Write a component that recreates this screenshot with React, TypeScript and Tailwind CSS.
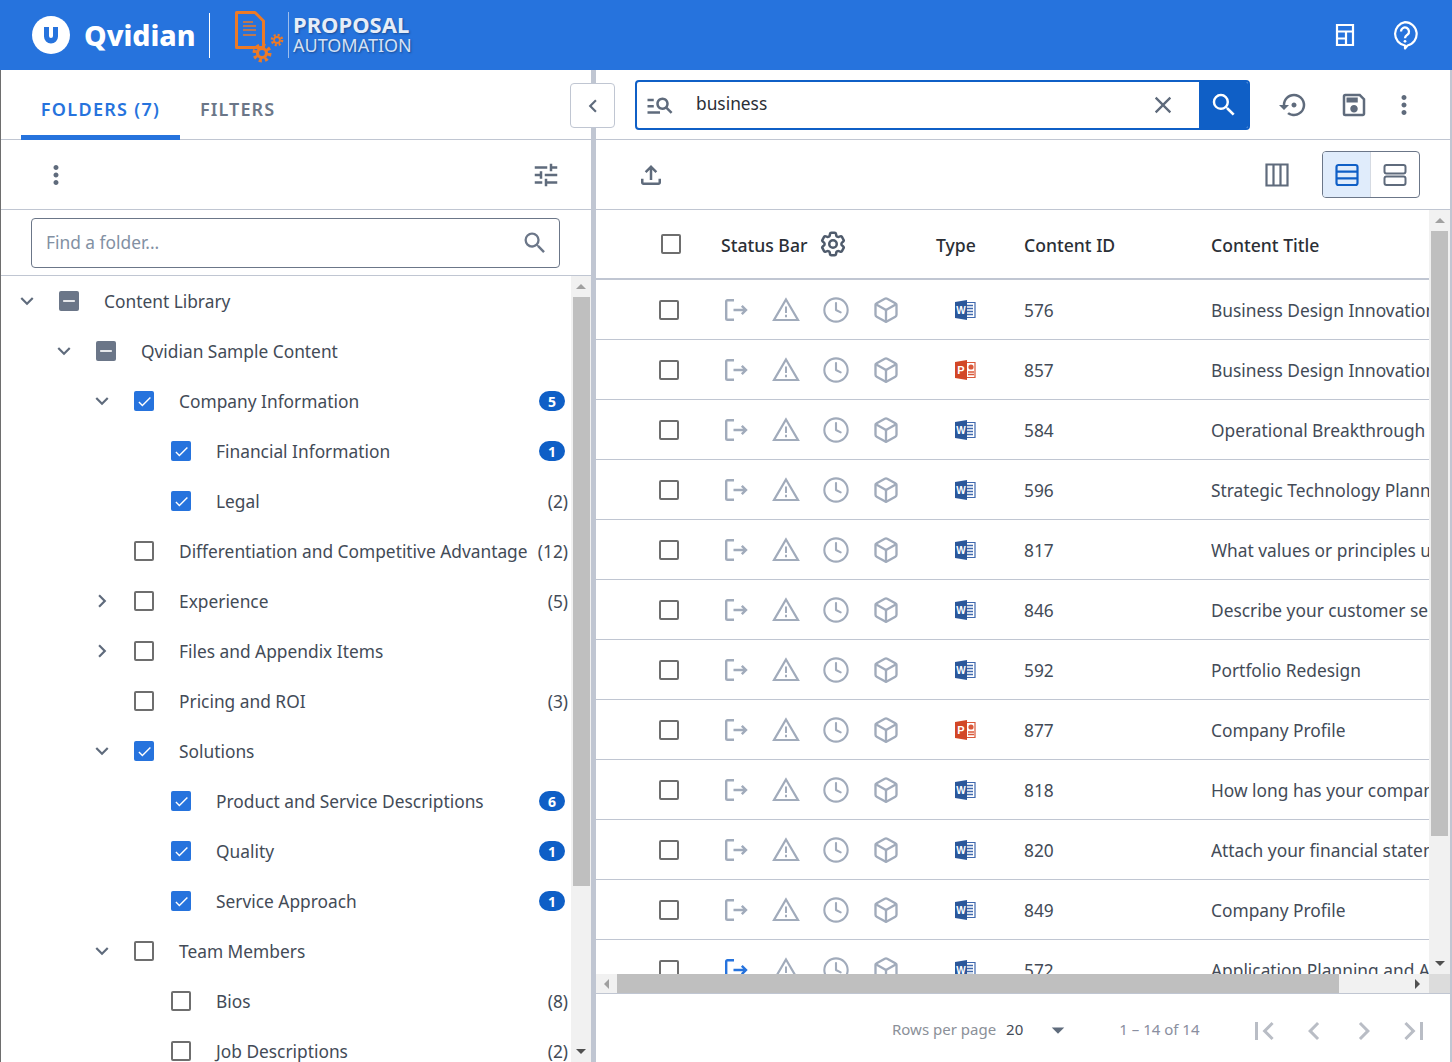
import { ReactNode } from 'react';
import {
  MdManageSearch,
  MdClose,
  MdSearch,
  MdSettingsBackupRestore,
  MdOutlineSave,
  MdMoreVert,
  MdOutlineFileUpload,
  MdTune,
  MdKeyboardArrowDown,
  MdKeyboardArrowRight,
  MdKeyboardArrowLeft,
  MdArrowDropDown,
  MdFirstPage,
  MdLastPage,
  MdCheck,
  MdRemove,
} from 'react-icons/md';
import { HiOutlineCog6Tooth } from 'react-icons/hi2';
import { Clock, Box } from 'lucide-react';

type TreeRow = {
  label: string;
  level: 0 | 1 | 2 | 3;
  chevron?: 'down' | 'right';
  state: 'none' | 'checked' | 'partial';
  badge?: number;
  count?: number;
};

const treeRows: TreeRow[] = [
  { label: 'Content Library', level: 0, chevron: 'down', state: 'partial' },
  { label: 'Qvidian Sample Content', level: 1, chevron: 'down', state: 'partial' },
  { label: 'Company Information', level: 2, chevron: 'down', state: 'checked', badge: 5 },
  { label: 'Financial Information', level: 3, state: 'checked', badge: 1 },
  { label: 'Legal', level: 3, state: 'checked', count: 2 },
  { label: 'Differentiation and Competitive Advantage', level: 2, state: 'none', count: 12 },
  { label: 'Experience', level: 2, chevron: 'right', state: 'none', count: 5 },
  { label: 'Files and Appendix Items', level: 2, chevron: 'right', state: 'none' },
  { label: 'Pricing and ROI', level: 2, state: 'none', count: 3 },
  { label: 'Solutions', level: 2, chevron: 'down', state: 'checked' },
  { label: 'Product and Service Descriptions', level: 3, state: 'checked', badge: 6 },
  { label: 'Quality', level: 3, state: 'checked', badge: 1 },
  { label: 'Service Approach', level: 3, state: 'checked', badge: 1 },
  { label: 'Team Members', level: 2, chevron: 'down', state: 'none' },
  { label: 'Bios', level: 3, state: 'none', count: 8 },
  { label: 'Job Descriptions', level: 3, state: 'none', count: 2 },
];

const levelPadding = ['pl-[13px]', 'pl-[50px]', 'pl-[88px]', 'pl-[125px]'];

const tableRows = [
  { id: 576, type: 'word', title: 'Business Design Innovation' },
  { id: 857, type: 'ppt', title: 'Business Design Innovation' },
  { id: 584, type: 'word', title: 'Operational Breakthrough' },
  { id: 596, type: 'word', title: 'Strategic Technology Planning' },
  { id: 817, type: 'word', title: 'What values or principles underlie' },
  { id: 846, type: 'word', title: 'Describe your customer service' },
  { id: 592, type: 'word', title: 'Portfolio Redesign' },
  { id: 877, type: 'ppt', title: 'Company Profile' },
  { id: 818, type: 'word', title: 'How long has your company' },
  { id: 820, type: 'word', title: 'Attach your financial statements' },
  { id: 849, type: 'word', title: 'Company Profile' },
  { id: 572, type: 'word', title: 'Application Planning and Analysis', active: true },
];

function Checkbox({ state }: { state: TreeRow['state'] }) {
  if (state === 'checked') {
    return (
      <span className="w-5 h-5 shrink-0 rounded-[2px] bg-[#2673dd] flex items-center justify-center text-white">
        <MdCheck size={17} />
      </span>
    );
  }
  if (state === 'partial') {
    return (
      <span className="w-5 h-5 shrink-0 rounded-[2px] bg-[#6b7688] flex items-center justify-center text-white">
        <MdRemove size={20} />
      </span>
    );
  }
  return <span className="block w-5 h-5 shrink-0 rounded-[2px] border-2 border-[#6e6e6e] bg-white" />;
}

function ExitIcon({ className }: { className: string }) {
  return (
    <svg width="26" height="26" viewBox="0 0 26 26" fill="none" stroke="currentColor" strokeWidth="2.400" className={className}>
      <path d="M11 3.200H4.500A1.300 1.300 0 0 0 3.200 4.500v17a1.300 1.300 0 0 0 1.300 1.300H11" />
      <path d="M10.500 13h12.500M18.800 8.800 23 13l-4.200 4.200" />
    </svg>
  );
}

function WarningIcon() {
  return (
    <svg width="28" height="25" viewBox="0 0 28 25" fill="none" stroke="currentColor" strokeWidth="2.200">
      <path d="M14 2.500 26 23H2z" strokeLinejoin="miter" />
      <path d="M14 9.500v6.500M14 17.800v2.400" strokeWidth="2" />
    </svg>
  );
}

function WordIcon() {
  return (
    <svg width="22" height="22" viewBox="0 0 22 22">
      <path d="M8 3.500h13v15H8z" fill="#fff" stroke="#3f68ad" strokeWidth="1.200" />
      <path d="M13 6.500h6M13 9.500h6M13 12.500h6M13 15.500h6" stroke="#3f68ad" strokeWidth="1.300" />
      <path d="M1 3 13 1v20L1 19z" fill="#2b579a" />
      <text x="7" y="14.500" textAnchor="middle" fontFamily="Liberation Sans" fontSize="10" fontWeight="700" fill="#fff">W</text>
    </svg>
  );
}

function PptIcon() {
  return (
    <svg width="22" height="22" viewBox="0 0 22 22">
      <path d="M8 3.500h13v15H8z" fill="#fff" stroke="#d9583a" strokeWidth="1.200" />
      <circle cx="17" cy="8" r="2.600" fill="#d9583a" />
      <path d="M14 13h6M14 15.500h6" stroke="#d9583a" strokeWidth="1.300" />
      <path d="M1 3 13 1v20L1 19z" fill="#d24726" />
      <text x="7" y="15" textAnchor="middle" fontFamily="Liberation Sans" fontSize="11" fontWeight="700" fill="#fff">P</text>
    </svg>
  );
}

function Logo() {
  return (
    <div className="flex items-center h-full">
      <div className="w-[38px] h-[38px] ml-[32px] rounded-full bg-white flex items-center justify-center">
        <svg width="16" height="18" viewBox="0 0 16 18">
          <path d="M1 1h5v9a2 2 0 0 0 4 0V1h5v9.500A7 7 0 0 1 1 10.500z" fill="#2673dd" />
        </svg>
      </div>
      <span className="ml-[14px] w-[111px] whitespace-nowrap font-['Inter',sans-serif] font-extrabold text-[28.500px] leading-none text-white">Qvidian</span>
      <div className="ml-[14px] w-px h-[45px] bg-white" />
      <svg width="52" height="60" viewBox="0 0 52 60" className="ml-[23px]" fill="none" stroke="#ec7a26">
        <path d="M3.500 7.500H22L30.500 16v26.500h-27z" strokeWidth="3" strokeLinejoin="round" />
        <path d="M10 17h10M10 21h13M10 25h13M10 30h13" strokeWidth="1.700" />
        <circle cx="29" cy="48" r="4.500" strokeWidth="3.200" />
        <circle cx="29" cy="48" r="7.500" strokeWidth="4" strokeDasharray="3 2.890" />
        <circle cx="44" cy="35" r="3" strokeWidth="1.800" />
        <circle cx="44" cy="35" r="5" strokeWidth="2.600" strokeDasharray="2 1.930" />
      </svg>
      <div className="w-px h-[46px] bg-[#9dbdec] ml-[3px]" />
      <div className="ml-[4px] pb-[2px] flex flex-col font-['Liberation_Sans',sans-serif] text-[#e6edf8] [text-shadow:1px_1px_2px_rgba(20,50,100,0.6)]">
        <span className="font-bold text-[22px] leading-[20px]">PROPOSAL</span>
        <span className="mt-[2px] text-[18px] leading-[18px] text-[#d5e1f4]">AUTOMATION</span>
      </div>
    </div>
  );
}

function TreeItem({ row }: { row: TreeRow }) {
  return (
    <div className={`flex items-center h-[50px] shrink-0 pr-[3px] ${levelPadding[row.level]}`}>
      <span className="w-[26px] mr-[19px] shrink-0 flex justify-center text-[#5f6b7c]">
        {row.chevron === 'down' && <MdKeyboardArrowDown size={26} />}
        {row.chevron === 'right' && <MdKeyboardArrowRight size={26} />}
      </span>
      <Checkbox state={row.state} />
      <span className="ml-[25px] pt-[2px] flex-1 whitespace-nowrap text-[17.33px] text-[#434b57]">{row.label}</span>
      {row.badge !== undefined && (
        <span className="mr-[3px] w-[26px] h-[20px] rounded-full bg-[#0f5fc6] text-white text-[14px] font-bold flex items-center justify-center">
          {row.badge}
        </span>
      )}
      {row.count !== undefined && <span className="pt-[2px] text-[17.33px] text-[#434b57]">({row.count})</span>}
    </div>
  );
}

function TableRow({ row }: { row: (typeof tableRows)[number] }) {
  const iconColor = 'text-[#a1abbb]';
  return (
    <div className="flex items-center h-[60px] shrink-0 border-b border-[#c0c6d2] text-[17.33px] text-[#434b57]">
      <div className="w-[115px] pl-[63px] shrink-0">
        <Checkbox state="none" />
      </div>
      <div className="w-[50px] shrink-0 flex justify-center">
        <ExitIcon className={row.active ? 'text-[#2673dd]' : iconColor} />
      </div>
      <div className={`w-[50px] shrink-0 flex justify-center ${iconColor}`}>
        <WarningIcon />
      </div>
      <div className={`w-[50px] shrink-0 flex justify-center ${iconColor}`}>
        <Clock size={28} strokeWidth={1.800} />
      </div>
      <div className={`w-[50px] shrink-0 flex justify-center ${iconColor}`}>
        <Box size={28} strokeWidth={2} />
      </div>
      <div className="w-[113px] pl-[43px] shrink-0">{row.type === 'word' ? <WordIcon /> : <PptIcon />}</div>
      <div className="w-[187px] shrink-0 pt-[3px]">{row.id}</div>
      <div className="flex-1 min-w-0 overflow-hidden whitespace-nowrap pt-[3px]">{row.title}</div>
    </div>
  );
}

function ScrollTrack({ children, className }: { children: ReactNode; className: string }) {
  return <div className={`bg-[#f1f1f1] flex shrink-0 ${className}`}>{children}</div>;
}

export default function App() {
  return (
    <div className="w-[1452px] h-[1062px] flex flex-col overflow-hidden bg-white font-['Noto_Sans',sans-serif]">
      <header className="h-[70px] shrink-0 bg-[#2673dd] flex items-center justify-between">
        <Logo />
        <div className="flex items-center text-white">
          <svg width="20" height="24" viewBox="0 0 20 24" fill="none" stroke="currentColor" strokeWidth="2.200" className="mr-[36px]">
            <path d="M2 2h16v20H2zM2 8.500h16M11 8.500V22M2 15.500h9" />
          </svg>
          <svg width="28" height="30" viewBox="0 0 28 30" fill="none" stroke="currentColor" className="mr-[33px]">
            <path d="M14 2.200a11.800 11.800 0 0 1 2.500 23.300L14 28.500v-3A11.800 11.800 0 0 1 14 2.200z" strokeWidth="2.200" strokeLinejoin="round" />
            <path d="M10 11.500a4 4 0 1 1 6.500 3.100c-1.500 1.200-2.500 1.800-2.500 3.600" strokeWidth="2.300" />
            <circle cx="14" cy="21.300" r="1.400" fill="currentColor" stroke="none" />
          </svg>
        </div>
      </header>

      <div className="flex-1 min-h-0 flex relative">
        {/* Folder panel */}
        <aside className="w-[591px] shrink-0 flex flex-col border-l border-[#6e6e6e]">
          <div className="h-[70px] shrink-0 flex border-b border-[#c0c6d2]">
            <div className="ml-[20px] w-[159px] h-[70px] flex items-center justify-center border-b-[5px] border-[#2673dd] text-[#2673dd] text-[18px] font-semibold tracking-[1.300px] pt-[13px]">
              FOLDERS (7)
            </div>
            <div className="ml-[20px] h-[69px] flex items-center text-[#6b7688] text-[18px] font-semibold tracking-[1.100px] pt-[9px]">FILTERS</div>
          </div>
          <div className="h-[70px] shrink-0 flex items-center justify-between border-b border-[#c0c6d2] text-[#5f6b7c]">
            <MdMoreVert size={30} className="ml-[40px]" />
            <MdTune size={30} className="mr-[30px]" />
          </div>
          <div className="h-[66px] shrink-0 border-b border-[#c0c6d2] pt-[8px] pl-[30px] pr-[31px]">
            <div className="h-[50px] rounded-[4px] border border-[#6b7688] flex items-center justify-between pl-[14px] pr-[10px]">
              <span className="text-[17.33px] text-[#8290a3]">Find a folder...</span>
              <MdSearch size={28} className="text-[#6b7688]" />
            </div>
          </div>
          <div className="flex-1 min-h-0 flex">
            <div className="flex-1 min-w-0 overflow-hidden flex flex-col">
              {treeRows.map((row) => (
                <TreeItem key={row.label} row={row} />
              ))}
            </div>
            <ScrollTrack className="w-[20px] flex-col items-center">
              <div className="h-[21px] w-full shrink-0 flex items-center justify-center">
                <div className="w-0 h-0 border-x-[5px] border-x-transparent border-b-[5px] border-b-[#a0a0a0]" />
              </div>
              <div className="w-[17px] h-[589px] bg-[#bfbfbf]" />
              <div className="flex-1 w-full flex items-end justify-center pb-[8px]">
                <div className="w-0 h-0 border-x-[5px] border-x-transparent border-t-[5px] border-t-[#505050]" />
              </div>
            </ScrollTrack>
          </div>
        </aside>

        <div className="w-[5px] shrink-0 bg-[#c0c6d2]" />

        {/* Content panel */}
        <main className="flex-1 min-w-0 flex flex-col border-r-2 border-[#c0c6d2]">
          <div className="h-[70px] shrink-0 flex items-center border-b border-[#c0c6d2] text-[#5f6b7c] pt-[1px]">
            <div className="ml-[39px] w-[615px] h-[50px] rounded-[4px] border-2 border-[#0f5fc6] flex items-center overflow-hidden">
              <MdManageSearch size={30} className="ml-[8px]" />
              <span className="ml-[21px] pb-[2px] flex-1 text-[17.33px] text-[#2b2f36]">business</span>
              <MdClose size={28} className="mr-[22px]" />
              <div className="w-[49px] h-full bg-[#0f5fc6] flex items-center justify-center text-white">
                <MdSearch size={30} />
              </div>
            </div>
            <MdSettingsBackupRestore size={30} className="ml-[29px]" />
            <MdOutlineSave size={30} className="ml-[30px]" />
            <MdMoreVert size={30} className="ml-[20px]" />
          </div>
          <div className="h-[70px] shrink-0 flex items-center justify-between border-b border-[#c0c6d2] text-[#5f6b7c]">
            <MdOutlineFileUpload size={30} className="ml-[40px]" />
            <div className="flex items-center mr-[30px]">
              <svg width="24" height="24" viewBox="0 0 24 24" fill="none" stroke="currentColor" strokeWidth="2.200">
                <path d="M1.500 1.500h21v21h-21zM8.500 1.500v21M15.500 1.500v21" />
              </svg>
              <div className="ml-[33px] w-[98px] h-[47px] rounded-[4px] border border-[#6b7688] flex overflow-hidden">
                <div className="w-[48px] bg-[#e0ecfb] border-r border-[#d5dae2] flex items-center justify-center text-[#0f5fc6]">
                  <svg width="24" height="24" viewBox="0 0 24 24" fill="none" stroke="currentColor" strokeWidth="2.200">
                    <rect x="1.500" y="2" width="21" height="20" rx="2" />
                    <path d="M1.500 8.600h21M1.500 15.300h21" />
                  </svg>
                </div>
                <div className="flex-1 flex items-center justify-center">
                  <svg width="24" height="24" viewBox="0 0 24 24" fill="none" stroke="currentColor" strokeWidth="2">
                    <rect x="1.500" y="2" width="21" height="8.500" rx="2" />
                    <rect x="1.500" y="13.500" width="21" height="8.500" rx="2" />
                  </svg>
                </div>
              </div>
            </div>
          </div>

          <div className="flex-1 min-h-0 flex">
            <div className="flex-1 min-w-0 flex flex-col overflow-hidden">
              <div className="h-[70px] shrink-0 flex items-center border-b-2 border-[#c0c6d2] text-[17.600px] font-medium text-[#2b2f36]">
                <div className="w-[125px] pl-[65px] shrink-0">
                  <Checkbox state="none" />
                </div>
                <div className="w-[215px] shrink-0 flex items-center">
                  <span className="pt-[3px]">Status Bar</span>
                  <HiOutlineCog6Tooth size={30} strokeWidth={2} className="ml-[11px] text-[#4f5b6c]" />
                </div>
                <div className="w-[88px] shrink-0 pt-[3px]">Type</div>
                <div className="w-[187px] shrink-0 pt-[3px]">Content ID</div>
                <div className="pt-[3px]">Content Title</div>
              </div>
              {tableRows.map((row) => (
                <TableRow key={row.id} row={row} />
              ))}
            </div>
            <ScrollTrack className="w-[21px] flex-col items-center">
              <div className="h-[21px] w-full shrink-0 flex items-center justify-center">
                <div className="w-0 h-0 border-x-[5px] border-x-transparent border-b-[5px] border-b-[#a0a0a0]" />
              </div>
              <div className="w-[17px] h-[605px] bg-[#bfbfbf]" />
              <div className="flex-1 w-full flex items-end justify-center pb-[8px]">
                <div className="w-0 h-0 border-x-[5px] border-x-transparent border-t-[5px] border-t-[#505050]" />
              </div>
            </ScrollTrack>
          </div>

          <div className="h-[20px] shrink-0 flex items-center bg-[#f1f1f1] border-b border-[#c0c6d2]">
            <div className="w-[21px] flex justify-center">
              <div className="w-0 h-0 border-y-[5px] border-y-transparent border-r-[5px] border-r-[#a0a0a0]" />
            </div>
            <div className="w-[722px] h-[19px] bg-[#bfbfbf]" />
            <div className="flex-1 pl-[76px]">
              <div className="w-0 h-0 border-y-[5px] border-y-transparent border-l-[5px] border-l-[#505050]" />
            </div>
            <div className="w-[21px] h-[19px] bg-[#dcdcdc]" />
          </div>

          <div className="h-[68px] shrink-0 flex items-center text-[15px] pt-[3px]">
            <span className="ml-[296px] text-[#8b9098]">Rows per page</span>
            <span className="ml-[10px] text-[#434b57]">20</span>
            <MdArrowDropDown size={30} className="ml-[20px] text-[#5f6b7c]" />
            <span className="ml-[46px] text-[#8a8fa0]">1 – 14 of 14</span>
            <div className="ml-[46px] mt-[3px] flex items-center gap-[14px] text-[#b9bdc5]">
              <MdFirstPage size={36} />
              <MdKeyboardArrowLeft size={36} />
              <MdKeyboardArrowRight size={36} />
              <MdLastPage size={36} />
            </div>
          </div>
        </main>

        <button className="absolute left-[570px] top-[13px] w-[45px] h-[45px] rounded-[4px] bg-white border border-[#c0c6d2] flex items-center justify-center text-[#5f6b7c]">
          <MdKeyboardArrowLeft size={26} />
        </button>
      </div>
    </div>
  );
}
